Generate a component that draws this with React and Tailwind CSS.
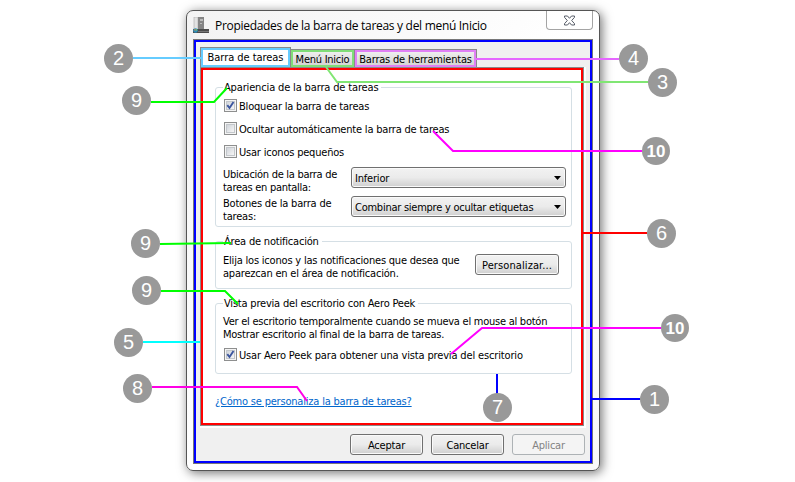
import React from "react";

const ui = "font-['DejaVu_Sans_Condensed','DejaVu_Sans',sans-serif] [font-stretch:condensed]";

function Check({ checked, children, className = "" }) {
  return (
    <div className={`flex h-[13px] items-center ${className}`}>
      <span className="flex size-[13px] shrink-0 items-center justify-center border border-[#8e8f8f] bg-[#f4f4f4]">
        <span className="flex size-[9px] items-center justify-center border border-[#c3c7cb] bg-linear-to-br from-[#d0d4da] to-[#f6f6f6]">
          {checked && (
            <svg viewBox="0 0 9 9" className="size-[9px] shrink-0" fill="none" stroke="#3b559e" strokeWidth="1.9">
              <path d="M1.3 4.2 3.5 7 7.5 1" />
            </svg>
          )}
        </span>
      </span>
      <span className="ml-[2px] mt-[2px]">{children}</span>
    </div>
  );
}

function Group({ title, titleClass = "", className = "", children }) {
  return (
    <fieldset className={`ml-[12px] w-[357px] rounded-[3px] border border-[#d5dfe5] pl-[7px] ${className}`}>
      <legend className={`h-[13px] pl-px pr-[3px] leading-[13px] ${titleClass}`}>{title}</legend>
      {children}
    </fieldset>
  );
}

const face =
  "rounded-[3px] border border-[#707070] bg-linear-to-b from-[#f2f2f2] from-0% via-[#ebebeb] via-50% to-[#cfcfcf] shadow-[inset_0_0_0_1px_#fafafa]";

function Select({ children }) {
  return (
    <div className={`flex h-[21px] w-[215px] shrink-0 items-center justify-between pl-[3px] pr-[4px] ${face}`}>
      <span className="pt-[2px]">{children}</span>
      <svg viewBox="0 0 7 4" className="h-[4px] w-[7px]">
        <path d="M0 0H7L3.5 4Z" />
      </svg>
    </div>
  );
}

function Button({ children, className = "", disabled }) {
  return (
    <button
      className={`flex h-[21px] items-center justify-center pt-[2px] ${className} ${
        disabled ? "rounded-[3px] border border-[#adb2b5] bg-[#f4f4f4] text-[#838383]" : face
      }`}
    >
      {children}
    </button>
  );
}

const badges = [
  ["2", "left-[104px] top-[44px]"],
  ["9", "left-[122px] top-[86px]"],
  ["9", "left-[131px] top-[229px]"],
  ["9", "left-[132px] top-[276px]"],
  ["5", "left-[114px] top-[328px]"],
  ["8", "left-[123px] top-[374px]"],
  ["4", "left-[619px] top-[44px]"],
  ["3", "left-[648px] top-[68px]"],
  ["10", "left-[642px] top-[137px]"],
  ["6", "left-[647px] top-[219px]"],
  ["10", "left-[661px] top-[314px]"],
  ["1", "left-[640px] top-[385px]"],
  ["7", "left-[483px] top-[393px]"],
];

const leaders = [
  ["#66ccff", "133,58 202,58"],
  ["#00ff00", "151,102 214,102 227,88"],
  ["#00ff00", "160,244 231,243"],
  ["#00ff00", "161,291 225,291 238,304"],
  ["#00ffff", "143,342 200,342"],
  ["#ff00e6", "152,387 297,387 307,401"],
  ["#e566ff", "476,59 619,59"],
  ["#80e673", "326,67 337,82 648,82"],
  ["#ff00ff", "433,131 453,151 642,151"],
  ["#ff0000", "583,233 647,233"],
  ["#ff00ff", "451,354 482,328 661,328"],
  ["#0000ff", "592,399 640,399"],
  ["#0000ff", "497,374 497,394"],
];

export default function App() {
  return (
    <div className={`relative h-[482px] w-[795px] overflow-hidden bg-white text-[11px] leading-[13px] tracking-[-0.2px] whitespace-nowrap text-black ${ui}`}>
      <div className="pl-[186px] pt-[10px]">
        <div className="h-[461px] w-[414px] rounded-[7px] border border-[#555] bg-linear-to-br from-[#f3f3f3] via-white to-[#f9f9f9] pl-[6px] shadow-[2px_2px_11px_rgba(0,0,0,0.55)]">
          <div className="flex h-[28px] w-[400px] items-start">
            <svg viewBox="0 0 16 16" className="mt-[6px] size-[16px]">
              <path d="M1 0H5V13H1Z" fill="#e2e2e2" stroke="#aaa" strokeWidth=".6" />
              <path d="M5 0H11V13H5Z" fill="#858585" />
              <path d="M7 2H10V4H7ZM7 6H9V7H7Z" fill="#bbb" />
              <path d="M0 12H16V16H0Z" fill="#4c4c4c" />
              <path d="M5 14H16V15H5Z" fill="#777" />
              <circle cx="2.5" cy="13.5" r="2.3" fill="#2c8fbd" />
              <path d="M1.2 12.2H2.5V13.5H1.2Z" fill="#e07a30" />
              <path d="M2.7 12.2H4V13.5H2.7Z" fill="#8cc850" />
            </svg>
            <span className="ml-[6px] mt-[6px] font-['Open_Sans','Noto_Sans',sans-serif] text-[12px] leading-[17px] tracking-[-0.3px] [font-stretch:normal]">
              Propiedades de la barra de tareas y del menú Inicio
            </span>
            <div className="ml-auto flex h-[19px] w-[47px] items-center justify-center rounded-b-[4px] border border-t-0 border-[#a4a4a4] bg-white/60">
              <svg viewBox="0 0 13 11" className="h-[11px] w-[13px]" fill="#fff" stroke="#555b66" strokeWidth="1">
                <path d="M1.5 1H4.5L6.5 3.3 8.5 1H11.5V2.3L8.7 5.5 11.5 8.7V10H8.5L6.5 7.7 4.5 10H1.5V8.7L4.3 5.5 1.5 2.3Z" />
              </svg>
            </div>
          </div>
          <div className="h-[425px] w-[400px] border border-[#777]">
            <div className="h-[423px] border-2 border-[#0000ff] bg-[#f0f0f0] pl-[4px] pt-[5px]">
              <div className="flex h-[20px] items-end">
                <div className="flex h-[20px] w-[91px] border border-b-0 border-[#8a8a8a]">
                  <div className="flex w-full items-center justify-center border-2 border-[#66ccff] bg-white">
                    <span className="tracking-[-0.05px]">Barra de tareas</span>
                  </div>
                </div>
                <div className="flex h-[18px] w-[64px] border border-b-0 border-l-0 border-[#8a8a8a]">
                  <div className="flex w-full items-center justify-center border-[2px] border-[#80dd78] bg-linear-to-b from-[#eee] to-[#d5d5d5] pt-[2px] tracking-[-0.25px]">
                    Menú Inicio
                  </div>
                </div>
                <div className="flex h-[18px] w-[122px] border border-b-0 border-l-0 border-[#8a8a8a]">
                  <div className="flex w-full items-center justify-center border-[2px] border-[#e080f5] bg-linear-to-b from-[#eee] to-[#d5d5d5] pt-[2px]">
                    Barras de herramientas
                  </div>
                </div>
              </div>
              <div className="h-[359px] w-[384px] border border-[#8a8a8a] shadow-[1px_1px_0_1px_#fff]">
                <div className="h-[357px] border-2 border-[#ff0000] bg-white pt-[11px]">
                  <Group title="Apariencia de la barra de tareas" titleClass="tracking-[-0.15px]" className="h-[146px] pt-[5px]">
                    <div className="flex flex-col gap-[10px] pl-px">
                      <Check checked>Bloquear la barra de tareas</Check>
                      <Check>Ocultar automáticamente la barra de tareas</Check>
                      <Check>Usar iconos pequeños</Check>
                    </div>
                    <div className="mt-[9px] flex h-[29px]">
                      <div className="w-[128px] pt-[1px] tracking-[-0.28px]">Ubicación de la barra de<br />tareas en pantalla:</div>
                      <Select>Inferior</Select>
                    </div>
                    <div className="flex h-[29px]">
                      <div className="w-[128px] pt-[1px]">Botones de la barra de<br />tareas:</div>
                      <Select><span className="tracking-[-0.25px]">Combinar siempre y ocultar etiquetas</span></Select>
                    </div>
                  </Group>
                  <Group title="Área de notificación" className="mt-[8px] h-[54px] pt-[6px]">
                    <div className="flex">
                      <div className="w-[252px]">Elija los iconos y las notificaciones que desea que<br />aparezcan en el área de notificación.</div>
                      <Button className="w-[84px] tracking-[0.1px]">Personalizar...</Button>
                    </div>
                  </Group>
                  <Group title="Vista previa del escritorio con Aero Peek" className="mt-[8px] h-[77px] pt-[5px]">
                    <div className="tracking-[-0.25px]">Ver el escritorio temporalmente cuando se mueva el mouse al botón<br />Mostrar escritorio al final de la barra de tareas.</div>
                    <Check checked className="mt-[7px] pl-px tracking-[-0.15px]">Usar Aero Peek para obtener una vista previa del escritorio</Check>
                  </Group>
                  <a className="ml-[12px] mt-[21px] block w-fit text-[#0066cc] underline">¿Cómo se personaliza la barra de tareas?</a>
                </div>
              </div>
              <div className="ml-[150px] mt-[8px] flex gap-[8px]">
                <Button className="w-[73px]">Aceptar</Button>
                <Button className="w-[73px]">Cancelar</Button>
                <Button className="w-[73px]" disabled>Aplicar</Button>
              </div>
            </div>
          </div>
        </div>
      </div>

      <svg viewBox="0 0 795 482" className="absolute left-0 top-0 h-[482px] w-[795px]" fill="none" strokeWidth="2">
        {leaders.map(([color, points]) => (
          <polyline key={points} points={points} stroke={color} />
        ))}
      </svg>
      {badges.map(([n, place]) => (
        <div
          key={place}
          className={`absolute flex items-center justify-center rounded-full bg-[#999] font-['Liberation_Sans',Arial,sans-serif] tracking-normal text-white ${place} ${
            n === "10" ? "size-[28px] text-[17px] font-bold" : "size-[29px] text-[20px]"
          }`}
        >
          {n}
        </div>
      ))}
    </div>
  );
}
